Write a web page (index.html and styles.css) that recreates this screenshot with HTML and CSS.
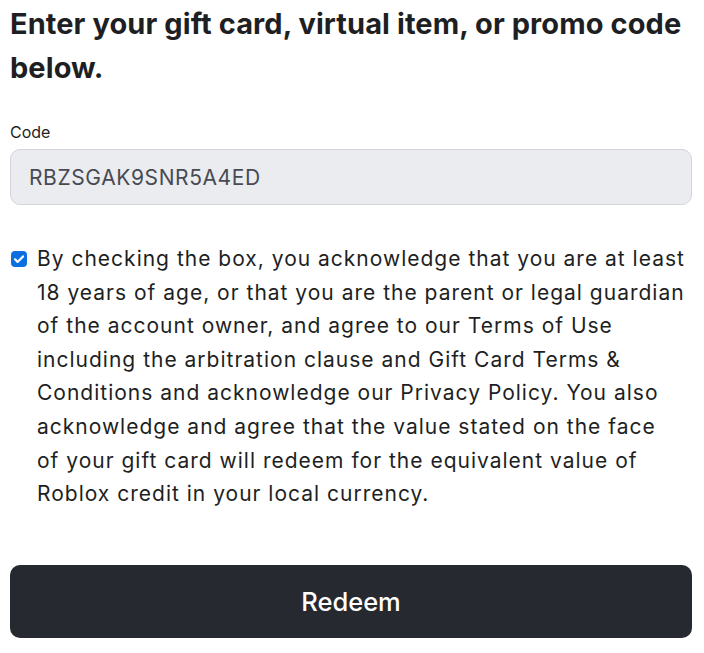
FILE: index.html
```html
<!DOCTYPE html>
<html lang="en">
<head>
<meta charset="utf-8">
<title>Redeem</title>
<link rel="stylesheet" href="styles.css">
</head>
<body>
<main class="page">
  <h1 class="title">Enter your gift card, virtual item, or promo code below.</h1>
  <div class="field">
    <label class="label" for="code">Code</label>
    <div class="input" id="code">RBZSGAK9SNR5A4ED</div>
  </div>
  <div class="consent">
    <span class="check"><svg viewBox="0 0 16 16" width="16" height="16"><rect x="0.5" y="0.5" width="15" height="15" rx="3" fill="#0b6fe0" stroke="#0b6fe0"/><path d="M4 8.3l2.6 2.6L12 5.4" fill="none" stroke="#fff" stroke-width="2.2" stroke-linecap="round" stroke-linejoin="round"/></svg></span>
    <p class="text">By checking the box, you acknowledge that you are at least 18 years of age, or that you are the parent or legal guardian of the account owner, and agree to our <a class="link">Terms of Use</a> including the arbitration clause and <a class="link">Gift Card Terms &amp; Conditions</a> and acknowledge our <a class="link">Privacy Policy</a>. You also acknowledge and agree that the value stated on the face<br>of your gift card will redeem for the equivalent value of Roblox credit in your local currency.</p>
  </div>
  <button class="redeem">Redeem</button>
</main>
</body>
</html>
```
FILE: styles.css
```css
html, body { margin: 0; padding: 0; background: #fff; }
body { font-family: Inter, "Noto Sans", sans-serif; color: #1e1f23; }
.page { padding: 0 12px 0 10px; display: flex; flex-direction: column; }
.title { margin: 2px 0 0; font-size: 29px; line-height: 44px; font-weight: 700; letter-spacing: 0.08px; color: #1e1f23; }
.field { margin-top: 32px; display: flex; flex-direction: column; }
.label { font-size: 16px; line-height: 20px; color: #1e1f23; }
.input { margin-top: 7px; height: 56px; box-sizing: border-box; border: 1px solid #d3d5da; border-radius: 10px; background: #ebecef; padding: 0 18px; display: flex; align-items: center; font-size: 21px; letter-spacing: 0.6px; color: #474a53; }
.consent { margin-top: 37px; display: flex; gap: 10px; align-items: flex-start; }
.check { flex: none; width: 16px; height: 16px; margin: 9px 0 0 1px; display: flex; }
.text { margin: 0; font-size: 21px; line-height: 33.6px; letter-spacing: 1px; color: #1e1f23; }
.link { color: #1e1f23; text-decoration: none; }
.redeem { margin-top: 54px; height: 73px; border: none; border-radius: 10px; background: #272930; color: #fff; font-family: inherit; font-size: 25.5px; font-weight: 500; }
```
